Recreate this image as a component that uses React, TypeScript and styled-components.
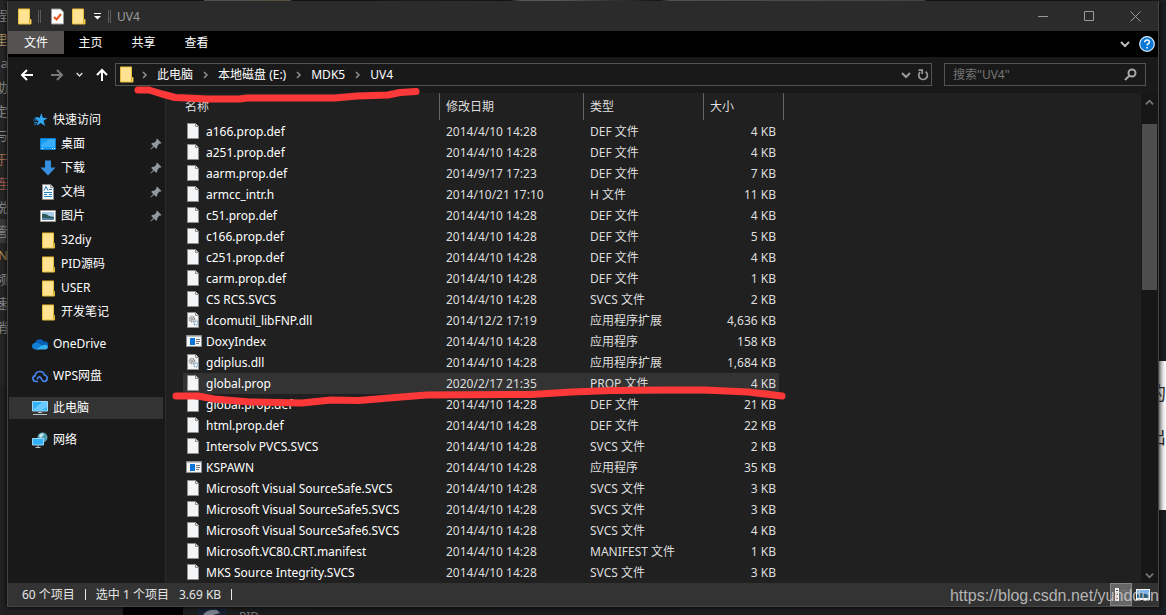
import React from 'react';
import styled, { createGlobalStyle } from 'styled-components';

const GlobalStyle = createGlobalStyle`
  * { box-sizing: border-box; }
  body {
    margin: 0;
    background: #1b1e1f;
    color: #fff;
    font: 12px/16px "Noto Sans", "Noto Sans CJK SC", sans-serif;
    overflow: hidden;
  }
  button, input { font: inherit; color: inherit; background: none; border: 0; padding: 0; margin: 0; }
  a { color: inherit; text-decoration: none; }
  svg { display: block; flex: none; }
`;

const Desktop = styled.div`
  position: relative;
  min-height: 100vh;
  padding: 1px 7px 7px;
  overflow: hidden;
`;

const Behind = styled.div`
  position: absolute;
  inset: 0;
  background: linear-gradient(90deg, #212121 123px, #030303 123px, #030303 183px, #1b1c1d 183px, #1b1e20 100%);
`;

const LeftPage = styled.div`
  position: absolute;
  left: 0;
  top: 0;
  width: 8px;
  display: flex;
  flex-direction: column;
  padding-top: 3px;
  background: #262626;
  overflow: hidden;
`;

const Fragment = styled.span<{ $tone?: string; $lit?: boolean }>`
  height: 24px;
  line-height: 24px;
  display: flex;
  justify-content: flex-end;
  white-space: nowrap;
  font-size: 13px;
  color: ${(p) => p.$tone || '#8d8d8d'};
  background: ${(p) => (p.$lit ? '#3a3a3a' : 'transparent')};
`;

const RightPage = styled.div`
  position: absolute;
  right: 0;
  top: 361px;
  width: 8px;
  height: 149px;
  display: flex;
  flex-direction: column;
  align-items: flex-end;
  padding-top: 12px;
  gap: 4px;
  background: linear-gradient(90deg, #c9c9c9, #fff);
  color: #2b2b2b;
  font-size: 18px;
  line-height: 40px;
  overflow: hidden;
  span { width: 8px; display: flex; justify-content: flex-end; }
`;

const TopStrip = styled.div`
  position: absolute;
  top: 0;
  left: 0;
  right: 0;
  height: 1px;
  background: linear-gradient(90deg, #222 204px, #8a8a8a 204px, #9a8a70 290px, #222 292px, #222 370px, #26303c 410px, #222 510px, #8c98a2 520px, #a59c90 555px, #252525 660px, #8c8c8c 670px, #777 924px, #202326 926px);
`;

const BottomPage = styled.div`
  position: absolute;
  left: 198px;
  top: 608px;
  height: 7px;
  display: flex;
  gap: 13px;
  overflow: hidden;
  color: #777;
  line-height: 18px;
  svg { background: #182033; }
`;

const Explorer = styled.main`
  position: relative;
  border: 1px solid #454545;
  border-top-color: #2b2b2b;
  background: #191919;
  box-shadow: 0 0 5px #000;
`;

const TitleBar = styled.header`
  height: 29px;
  display: flex;
  align-items: center;
  padding-left: 10px;
  background: #2b2b2b;
  color: #999;
`;

const QuickButton = styled.button`
  display: flex;
  align-items: center;
  justify-content: center;
  margin-right: 8px;
`;

const Divider = styled.span`
  width: 3px;
  height: 13px;
  margin: 0 10px 0 -2px;
  border: 1px solid #5c5c5c;
  border-width: 0 1px;
`;

const EndDivider = styled(Divider)`
  margin: 0 6px 0 -1px;
`;

const Title = styled.h1`
  flex: 1;
  margin: 0;
  font-size: 12px;
  font-weight: 400;
`;

const WindowButtons = styled.div`
  display: flex;
  gap: 1px;
`;

const WindowButton = styled.button`
  width: 45px;
  height: 29px;
  display: grid;
  place-items: center;
`;

const Ribbon = styled.nav`
  height: 26px;
  display: flex;
  align-items: flex-start;
  padding-right: 3px;
  background: #000;
`;

const Tab = styled.button<{ $file?: boolean }>`
  width: ${(p) => (p.$file ? '56px' : '53px')};
  height: 23px;
  padding-top: 1px;
  background: ${(p) => (p.$file ? '#555351' : 'transparent')};
`;

const RibbonTools = styled.div`
  flex: 1;
  height: 26px;
  display: flex;
  align-items: center;
  justify-content: flex-end;
  gap: 9px;
`;

const IconButton = styled.button`
  display: grid;
  place-items: center;
`;

const AddressRow = styled.div`
  display: flex;
  gap: 12px;
  padding: 6px 12px 7px;
`;

const NavButtons = styled.div`
  display: flex;
  align-items: center;
  height: 23px;
  gap: 12px;
  margin-right: -6px;
`;

const HistoryButtons = styled.div`
  display: flex;
  gap: 16px;
`;

const AddressBox = styled.div`
  flex: 1;
  height: 23px;
  display: flex;
  align-items: center;
  padding: 0 2px 0 4px;
  border: 1px solid #535353;
`;

const Crumbs = styled.ol`
  flex: 1;
  display: flex;
  list-style: none;
  margin: 0;
  padding: 0 0 0 5px;
  li { display: flex; align-items: center; }
  a { padding: 0 7px 0 6px; }
`;

const AddressTools = styled.div`
  display: flex;
  align-items: center;
  gap: 6px;
`;

const SearchBox = styled.label`
  width: 202px;
  height: 23px;
  display: flex;
  align-items: center;
  padding: 0 8px;
  border: 1px solid #535353;
  input { flex: 1; min-width: 0; outline: 0; }
  input::placeholder { color: #757575; opacity: 1; }
`;

const Body = styled.div`
  display: flex;
`;

const Sidebar = styled.nav`
  width: 158px;
  padding: 15px 2px 0 1px;
  border-right: 1px solid #2b2b2b;
  ul { list-style: none; margin: 0 0 8px; padding: 0; }
  li { display: flex; height: 24px; align-items: center; }
`;

const SideLink = styled.a<{ $child?: boolean; $active?: boolean }>`
  flex: 1;
  height: 22px;
  display: flex;
  align-items: center;
  gap: 5px;
  padding: 0 1px 0 ${(p) => (p.$child ? '31px' : '23px')};
  background: ${(p) => (p.$active ? '#333' : 'transparent')};
  span { flex: 1; white-space: nowrap; }
`;

const FilePane = styled.section`
  flex: 1;
  min-width: 0;
  padding-left: 17px;
  background: #202020;
`;

const FileTable = styled.table`
  width: 601px;
  table-layout: fixed;
  border-collapse: separate;
  border-spacing: 0;
`;

const HeadCell = styled.th<{ $width: number; $first?: boolean }>`
  width: ${(p) => p.$width}px;
  height: 28px;
  padding: 0 6px 0 ${(p) => (p.$first ? '2px' : '6px')};
  text-align: left;
  font-weight: 400;
  color: #dedede;
  background: linear-gradient(#636363, #636363) right top / 1px 27px no-repeat;
`;

const Row = styled.tr<{ $selected?: boolean }>`
  height: 21px;
  background: ${(p) => (p.$selected ? 'linear-gradient(#333, #333) left / calc(100% - 5px) 100% no-repeat' : 'transparent')};
`;

const Cell = styled.td<{ $right?: boolean }>`
  padding: 0 8px 0 6px;
  text-align: ${(p) => (p.$right ? 'right' : 'left')};
  white-space: nowrap;
  color: #dedede;
`;

const NameCell = styled.td`
  padding: 0 0 0 3px;
  div { display: flex; align-items: center; gap: 4px; white-space: nowrap; }
`;

const ScrollBar = styled.div`
  width: 17px;
  display: flex;
  flex-direction: column;
  align-items: center;
  background: #171717;
`;

const ScrollTrack = styled.div`
  flex: 1;
  width: 15px;
`;

const Thumb = styled.div`
  height: 38%;
  max-height: 166px;
  background: #4d4d4d;
`;

const ScrollArrow = styled.button<{ $tall?: boolean }>`
  width: 17px;
  height: ${(p) => (p.$tall ? '31px' : '17px')};
  display: flex;
  justify-content: center;
  padding-top: 5px;
`;

const StatusBar = styled.footer`
  height: 23px;
  display: flex;
  align-items: center;
  padding: 0 4px 0 14px;
  gap: 10px;
  background: #333;
  color: #e6e6e6;
`;

const StatusMark = styled.i`
  width: 1px;
  height: 11px;
  background: #e6e6e6;
`;

const ViewButtons = styled.div`
  flex: 1;
  display: flex;
  justify-content: flex-end;
`;

const ViewButton = styled.button<{ $on?: boolean }>`
  width: 22px;
  height: 23px;
  display: grid;
  place-items: center;
  border: 1px solid ${(p) => (p.$on ? '#858585' : 'transparent')};
  background: ${(p) => (p.$on ? '#666' : 'transparent')};
`;

const Watermark = styled.div`
  position: absolute;
  right: 7px;
  top: 586px;
  font: 16px/20px "Liberation Sans", sans-serif;
  color: rgba(205, 205, 205, 0.85);
  pointer-events: none;
`;

const Marker = styled.svg`
  position: absolute;
  left: 0;
  top: 0;
  pointer-events: none;
`;

const Folder = () => (
  <svg width="14" height="17" viewBox="0 0 14 17">
    <path d="M.5 1h11v10.500h1.500v4.500H.5z" fill="#ffe393" stroke="#e9bf3b" />
    <path d="M11.500 11.500v4" stroke="#d9a92a" />
  </svg>
);

const Chevron = ({ w = 9, color = '#bbb' , turn = 0 }: { w?: number; color?: string; turn?: number }) => (
  <svg width={w} height={w} viewBox="0 0 10 10">
    <path d="M1 3l4 4 4-4" fill="none" stroke={color} strokeWidth="2" transform={`rotate(${turn} 5 5)`} />
  </svg>
);

const CrumbChevron = () => (
  <svg width="12" height="12" viewBox="0 0 12 12">
    <path d="M4 3l3 3-3 3" fill="none" stroke="#8f8f8f" strokeWidth="1.500" />
  </svg>
);

const Page = ({ gear }: { gear?: boolean }) => (
  <svg width="16" height="17" viewBox="0 0 16 17">
    <path d="M1.500.5h8l3 3v12h-11z" fill="#f4f5f6" stroke="#8f8f8f" />
    <path d="M9.500.5v3h3" fill="#ddd" stroke="#8f8f8f" />
    {gear && (
      <g fill="none">
        <circle cx="6" cy="7" r="2.500" stroke="#85898c" strokeWidth="1.500" strokeDasharray="1.200 .6" />
        <circle cx="6" cy="7" r="1" stroke="#85898c" />
        <circle cx="10" cy="11" r="2" stroke="#86a9c0" strokeWidth="1.500" strokeDasharray="1.200 .6" />
      </g>
    )}
  </svg>
);

const AppIcon = () => (
  <svg width="16" height="17" viewBox="0 0 16 17">
    <path d="M.5 2.500h15v11H.5z" fill="#f5f5f5" stroke="#8b9196" />
    <path d="M1 3.500h14" stroke="#b9bec2" />
    <path d="M4 5h5v7H4z" fill="#0b74d8" />
    <path d="M10 6.500h4M10 8.500h4M10 10.500h3" stroke="#777" />
  </svg>
);

const Star = () => (
  <svg width="16" height="16" viewBox="0 0 16 16">
    <path d="M9.500 1l1.300 4.700 4.700.3-3.900 2.800L13 14l-4.300-3-4.200 2.800 1.800-4.700L2.500 6h5z" fill="#2fa5f2" />
    <path d="M3 5.500h4M1 8h5M2 10.500h3M2 13l3-2" stroke="#1b7fc6" />
  </svg>
);

const DesktopIcon = () => (
  <svg width="16" height="16" viewBox="0 0 16 16">
    <path d="M.5 2.500h15v11H.5z" fill="#1a9df5" stroke="#0b7fd0" />
    <path d="M1 9l9-6h5v8H1z" fill="#39aefa" />
    <path d="M2 12.500h1M12 12.500h1M14 12.500h1" stroke="#fff" />
  </svg>
);

const DownloadIcon = () => (
  <svg width="16" height="16" viewBox="0 0 16 16">
    <path d="M5 .5h6v7h4.500L8 15.500.5 7.500H5z" fill="#3590e0" />
  </svg>
);

const DocumentIcon = () => (
  <svg width="16" height="16" viewBox="0 0 16 16">
    <path d="M2.500.5h8l3 3v12h-11z" fill="#f7f7f7" stroke="#8f8f8f" />
    <path d="M10.500.5v3h3" fill="#ddd" stroke="#8f8f8f" />
    <path d="M4 6.500L6 2.500l2 4M9 5.500h3M4 8.500h8M4 10.500h3M4 12.500h8M9 10.500h3" stroke="#2583c4" fill="none" />
  </svg>
);

const PictureIcon = () => (
  <svg width="16" height="16" viewBox="0 0 16 16">
    <path d="M.5 2.500h15v11H.5z" fill="#fff" stroke="#999" />
    <path d="M2 4h12v8H2z" fill="#a9cdea" />
    <path d="M2 6q4-1 7 2l5 1v3H2z" fill="#2e5d5c" />
    <path d="M2 10l12 .5V12H2z" fill="#5a86b4" />
  </svg>
);

const SideFolder = () => (
  <svg width="16" height="17" viewBox="-2 0 16 17">
    <path d="M.5 1h11v10.500h1v4.500H.5z" fill="#ffe393" stroke="#e9bf3b" />
    <path d="M11.500 11.500v4" stroke="#d9a92a" />
  </svg>
);

const CloudIcon = () => (
  <svg width="16" height="16" viewBox="0 0 16 16">
    <path d="M3 12.500A3 3 0 0 1 3 7a5 5 0 0 1 9-1.500 3.500 3.500 0 0 1 1.500 7z" fill="#0a5fb4" />
    <path d="M3 13.500A3.200 3.200 0 0 1 3.500 7q2-.5 4 .8l5 3-6 2.700z" fill="#1380d8" />
    <path d="M4 13.500l6.500-4.300q5-1.300 5.500 1.800-.3 2.500-3 2.500z" fill="#33b0f2" />
  </svg>
);

const WpsIcon = () => (
  <svg width="16" height="16" viewBox="0 0 16 16" fill="none" stroke="#4584ee" strokeWidth="1.700">
    <path d="M6 13.500H4A3 3 0 0 1 3.200 7.600 4.700 4.700 0 0 1 12.400 7 3.300 3.300 0 0 1 12.500 13.500q-2 0-3-2.500T7 9 5.200 11.300" />
  </svg>
);

const PcIcon = () => (
  <svg width="16" height="16" viewBox="0 0 16 16">
    <path d="M.5 1.500h15v9.500H.5z" fill="#31b2f8" stroke="#a5d9f5" />
    <path d="M1 10l9-8h5v5l-6 3.500z" fill="#69cbff" />
    <path d="M6 12.500h4M1 14.500h14" stroke="#b9c3ca" />
  </svg>
);

const NetworkIcon = () => (
  <svg width="16" height="16" viewBox="0 0 16 16">
    <circle cx="10.500" cy="5.500" r="5" fill="#4f9fb4" />
    <path d="M7 3q3-3 5-1l-2 3-2 1z" fill="#c4e6e8" />
    <path d="M.5 6.500h11v6.500H.5z" fill="#2fb0f8" stroke="#9ed8f6" />
    <path d="M6 13v2M3.500 15.500h5" stroke="#b9c3ca" />
  </svg>
);

const Pin = () => (
  <svg width="12" height="12" viewBox="0 0 12 12">
    <path d="M7 .5L11.500 5l-1.300.7-.6-.1L7.300 8l-.2 2.200-1 .5-2-2L.8 11.600l-.5-.5 3-3.200-2-2 .6-1L4.200 4.700l2.300-2.300-.2-.8z" fill="#929aa1" />
  </svg>
);

const Arrow = ({ turn = 0, color = '#fff' }: { turn?: number; color?: string }) => (
  <svg width="14" height="14" viewBox="0 0 14 14">
    <path d="M7 2L2 7l5 5M2 7h11" fill="none" stroke={color} strokeWidth="2" transform={`rotate(${turn} 7 7)`} />
  </svg>
);

type SideItem = { label: string; icon: React.ReactNode; child?: boolean; pin?: boolean; active?: boolean };

const sideGroups: SideItem[][] = [
  [
    { label: '快速访问', icon: <Star /> },
    { label: '桌面', icon: <DesktopIcon />, child: true, pin: true },
    { label: '下载', icon: <DownloadIcon />, child: true, pin: true },
    { label: '文档', icon: <DocumentIcon />, child: true, pin: true },
    { label: '图片', icon: <PictureIcon />, child: true, pin: true },
    { label: '32diy', icon: <SideFolder />, child: true },
    { label: 'PID源码', icon: <SideFolder />, child: true },
    { label: 'USER', icon: <SideFolder />, child: true },
    { label: '开发笔记', icon: <SideFolder />, child: true },
  ],
  [{ label: 'OneDrive', icon: <CloudIcon /> }],
  [{ label: 'WPS网盘', icon: <WpsIcon /> }],
  [{ label: '此电脑', icon: <PcIcon />, active: true }],
  [{ label: '网络', icon: <NetworkIcon /> }],
];

const files: [string, string, string, string][] = [
  ['a166.prop.def', '2014/4/10 14:28', 'DEF 文件', '4 KB'],
  ['a251.prop.def', '2014/4/10 14:28', 'DEF 文件', '4 KB'],
  ['aarm.prop.def', '2014/9/17 17:23', 'DEF 文件', '7 KB'],
  ['armcc_intr.h', '2014/10/21 17:10', 'H 文件', '11 KB'],
  ['c51.prop.def', '2014/4/10 14:28', 'DEF 文件', '4 KB'],
  ['c166.prop.def', '2014/4/10 14:28', 'DEF 文件', '5 KB'],
  ['c251.prop.def', '2014/4/10 14:28', 'DEF 文件', '4 KB'],
  ['carm.prop.def', '2014/4/10 14:28', 'DEF 文件', '1 KB'],
  ['CS RCS.SVCS', '2014/4/10 14:28', 'SVCS 文件', '2 KB'],
  ['dcomutil_libFNP.dll', '2014/12/2 17:19', '应用程序扩展', '4,636 KB'],
  ['DoxyIndex', '2014/4/10 14:28', '应用程序', '158 KB'],
  ['gdiplus.dll', '2014/4/10 14:28', '应用程序扩展', '1,684 KB'],
  ['global.prop', '2020/2/17 21:35', 'PROP 文件', '4 KB'],
  ['global.prop.def', '2014/4/10 14:28', 'DEF 文件', '21 KB'],
  ['html.prop.def', '2014/4/10 14:28', 'DEF 文件', '22 KB'],
  ['Intersolv PVCS.SVCS', '2014/4/10 14:28', 'SVCS 文件', '2 KB'],
  ['KSPAWN', '2014/4/10 14:28', '应用程序', '35 KB'],
  ['Microsoft Visual SourceSafe.SVCS', '2014/4/10 14:28', 'SVCS 文件', '3 KB'],
  ['Microsoft Visual SourceSafe5.SVCS', '2014/4/10 14:28', 'SVCS 文件', '3 KB'],
  ['Microsoft Visual SourceSafe6.SVCS', '2014/4/10 14:28', 'SVCS 文件', '4 KB'],
  ['Microsoft.VC80.CRT.manifest', '2014/4/10 14:28', 'MANIFEST 文件', '1 KB'],
  ['MKS Source Integrity.SVCS', '2014/4/10 14:28', 'SVCS 文件', '3 KB'],
];

const fragments: { text: string; tone?: string; lit?: boolean }[] = [
  { text: '程' }, { text: '里', tone: '#a08a60' }, { text: 'lla' }, { text: '助' }, { text: '定' }, { text: '与' },
  { text: '于', tone: '#a0694f' }, { text: '连', tone: '#9c5a50' }, { text: '说' }, { text: '管', lit: true },
  { text: 'N', tone: '#b09050' }, { text: '频' }, { text: '速' }, { text: '消' }, { text: '' }, { text: '' },
];

const fileIcon = (type: string) => {
  if (type === '应用程序') return <AppIcon />;
  return <Page gear={type === '应用程序扩展'} />;
};

export default function App() {
  return (
    <Desktop>
      <GlobalStyle />
      <Behind>
        <LeftPage>
          {fragments.map((f, i) => (
            <Fragment key={i} $tone={f.tone} $lit={f.lit}>{f.text}</Fragment>
          ))}
        </LeftPage>
        <RightPage><span>的</span><span>出</span></RightPage>
        <BottomPage>
          <svg width="28" height="7" viewBox="0 0 28 7"><path d="M5 7q4-6 14-5l3 3-7 2z" fill="#777f8c" /></svg>
          <span>PID</span>
        </BottomPage>
        <TopStrip />
      </Behind>

      <Explorer>
        <TitleBar>
          <QuickButton aria-label="窗口菜单"><Folder /></QuickButton>
          <Divider />
          <QuickButton aria-label="属性">
            <svg width="13" height="17" viewBox="0 0 13 17">
              <path d="M.5 1h9l3 3v12H.5z" fill="#fff" stroke="#999" />
              <path d="M3 9l2.500 2.500L10 6" fill="none" stroke="#e2561d" strokeWidth="2" />
            </svg>
          </QuickButton>
          <QuickButton aria-label="新建文件夹"><Folder /></QuickButton>
          <QuickButton aria-label="自定义快速访问工具栏">
            <svg width="7" height="9" viewBox="0 0 7 9">
              <path d="M0 1.500h7" stroke="#fff" />
              <path d="M0 4h7L3.500 7.500z" fill="#fff" />
            </svg>
          </QuickButton>
          <EndDivider />
          <Title>UV4</Title>
          <WindowButtons>
            <WindowButton aria-label="最小化">
              <svg width="11" height="11" stroke="#999"><path d="M0 5.500h10" /></svg>
            </WindowButton>
            <WindowButton aria-label="最大化">
              <svg width="11" height="11" stroke="#999" fill="none"><path d="M.5.5h9v9h-9z" /></svg>
            </WindowButton>
            <WindowButton aria-label="关闭">
              <svg width="11" height="11" stroke="#999"><path d="M.5.5l10 10M10.500.5l-10 10" /></svg>
            </WindowButton>
          </WindowButtons>
        </TitleBar>

        <Ribbon>
          <Tab $file>文件</Tab>
          <Tab>主页</Tab>
          <Tab>共享</Tab>
          <Tab>查看</Tab>
          <RibbonTools>
            <IconButton aria-label="展开功能区"><Chevron w={10} color="#bdbdbd" /></IconButton>
            <IconButton aria-label="帮助">
              <svg width="16" height="16" viewBox="0 0 16 16">
                <circle cx="8" cy="8" r="7.300" fill="#0a78d6" stroke="#dcebf7" strokeWidth="1.200" />
                <path d="M5.800 6.200q0-2.200 2.300-2.200t2.200 2q0 1.200-1.200 1.900-1 .6-1 1.600M8 11v1.600" fill="none" stroke="#fff" strokeWidth="1.500" />
              </svg>
            </IconButton>
          </RibbonTools>
        </Ribbon>

        <AddressRow>
          <NavButtons>
            <HistoryButtons>
              <IconButton aria-label="后退"><Arrow /></IconButton>
              <IconButton aria-label="前进"><Arrow turn={180} color="#7a7a7a" /></IconButton>
            </HistoryButtons>
            <IconButton aria-label="最近浏览的位置"><Chevron w={7} color="#ddd" /></IconButton>
            <IconButton aria-label="上移"><Arrow turn={90} /></IconButton>
          </NavButtons>
          <AddressBox>
            <Folder />
            <Crumbs>
              {['此电脑', '本地磁盘 (E:)', 'MDK5', 'UV4'].map((c) => (
                <li key={c}><CrumbChevron /><a href="#">{c}</a></li>
              ))}
            </Crumbs>
            <AddressTools>
              <IconButton aria-label="以前的位置"><Chevron w={10} color="#9b9b9b" /></IconButton>
              <IconButton aria-label="刷新">
                <svg width="12" height="13" viewBox="0 0 12 13">
                  <path d="M8.600 3.700A4.300 4.300 0 1 1 3 4.200" fill="none" stroke="#999" strokeWidth="1.700" />
                  <path d="M1.500 2.200h3.700v3.700" fill="none" stroke="#999" strokeWidth="1.700" />
                </svg>
              </IconButton>
            </AddressTools>
          </AddressBox>
          <SearchBox>
            <input type="text" aria-label="搜索" placeholder={'搜索"UV4"'} />
            <svg width="13" height="13" viewBox="0 0 13 13" fill="none" stroke="#a8a8a8" strokeWidth="2">
              <circle cx="8" cy="5" r="3.500" /><path d="M5.500 7.500L1 12" />
            </svg>
          </SearchBox>
        </AddressRow>

        <Body>
          <Sidebar>
            {sideGroups.map((group, i) => (
              <ul key={i}>
                {group.map((it) => (
                  <li key={it.label}>
                    <SideLink href="#" $child={it.child} $active={it.active}>
                      {it.icon}<span>{it.label}</span>{it.pin && <Pin />}
                    </SideLink>
                  </li>
                ))}
              </ul>
            ))}
          </Sidebar>
          <FilePane>
            <FileTable>
              <thead>
                <tr>
                  <HeadCell $width={257} $first>名称</HeadCell>
                  <HeadCell $width={144}>修改日期</HeadCell>
                  <HeadCell $width={120}>类型</HeadCell>
                  <HeadCell $width={80}>大小</HeadCell>
                </tr>
              </thead>
              <tbody>
                {files.map(([name, date, type, size]) => (
                  <Row key={name} $selected={name === 'global.prop'}>
                    <NameCell><div>{fileIcon(type)}{name}</div></NameCell>
                    <Cell>{date}</Cell>
                    <Cell>{type}</Cell>
                    <Cell $right>{size}</Cell>
                  </Row>
                ))}
              </tbody>
            </FileTable>
          </FilePane>
          <ScrollBar>
            <ScrollArrow $tall aria-label="向上滚动"><Chevron color="#777" turn={180} /></ScrollArrow>
            <ScrollTrack><Thumb /></ScrollTrack>
            <ScrollArrow aria-label="向下滚动"><Chevron color="#777" /></ScrollArrow>
          </ScrollBar>
        </Body>

        <StatusBar>
          <span>60 个项目</span>
          <StatusMark />
          <span>选中 1 个项目</span>
          <span>3.69 KB</span>
          <StatusMark />
          <ViewButtons>
            <ViewButton $on aria-label="详细信息">
              <svg width="14" height="13" viewBox="0 0 14 13">
                <path d="M0 0h4v13H0z" fill="#f4f4f4" transform="translate(1 0)" />
                <path d="M2 2.500h2M2 6.500h2" stroke="#444" />
                <path d="M2 10.500h2" stroke="#c33" />
                <path d="M7 2.500h6M7 6.500h6M7 10.500h6" stroke="#777" />
              </svg>
            </ViewButton>
            <ViewButton aria-label="大图标">
              <svg width="14" height="11" viewBox="0 0 14 11">
                <path d="M0 0h14v11H0z" fill="#fff" />
                <path d="M1 1h12v8H1z" fill="#7ab6ec" />
                <path d="M1 5l5-1 7 2v3H1z" fill="#2a5b78" />
              </svg>
            </ViewButton>
          </ViewButtons>
        </StatusBar>
      </Explorer>

      <Marker width="800" height="420" fill="none" stroke="#fd3838" strokeWidth="7" strokeLinecap="round" strokeLinejoin="round" aria-hidden="true">
        <path d="M138 90h11l13 4 13 3.500 33 1.500h32l7-1h88l22-2 31-1 12-2.500 16-1" />
        <path d="M176 396h22l16 3 36 3 52 1 29-3 28 .5 36-3 32-2.500 104-.5 41-2.500 40-1.500 48-.5h44l44 2 34 4" />
      </Marker>
      <Watermark>https://blog.csdn.net/yunddun</Watermark>
    </Desktop>
  );
}
